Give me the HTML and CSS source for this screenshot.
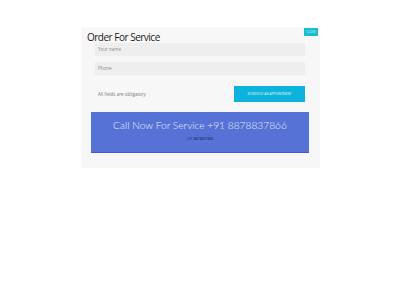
FILE: index.html
```html
<!DOCTYPE html>
<html>
<head>
<meta charset="utf-8">
<link rel="stylesheet" href="styles.css">
</head>
<body>
<div class="modal">
  <button class="close">CLOSE</button>
  <h2 class="title">Order For Service</h2>
  <div class="field">Your name</div>
  <div class="field">Phone</div>
  <div class="row">
    <span class="note">All fields are obligatory</span>
    <button class="submit">SCHEDULE AN APPOINTMENT</button>
  </div>
  <div class="callbox">
    <div class="call-main">Call Now For Service +91 8878837866</div>
    <div class="call-sub">+91 8878837866</div>
  </div>
</div>
</body>
</html>
```

FILE: styles.css
```css
html, body { margin: 0; padding: 0; background: #ffffff; }
body { font-family: "Open Sans", "Noto Sans", sans-serif; }
.modal {
  position: relative;
  margin: 28px 0 0 82px;
  width: 237px;
  height: 140px;
  background: #f7f7f7;
  box-shadow: 0 0 1px rgba(0,0,0,0.15);
  box-sizing: border-box;
  padding-top: 2px;
}
.close {
  position: absolute;
  top: 0;
  right: 1px;
  width: 14px;
  height: 8px;
  padding: 0;
  border: 0;
  background: #1bbcd1;
  color: #d8f4f8;
  font-size: 3px;
  line-height: 8px;
  font-family: "Open Sans", sans-serif;
}
.title {
  margin: 0 0 0 5px;
  height: 13px;
  font-size: 10px;
  line-height: 13px;
  letter-spacing: -0.5px;
  font-weight: 400;
  color: #1a1a1a;
  padding-top: 1px;
  box-sizing: border-box;
  font-family: "Open Sans", sans-serif;
}
.field {
  margin: 0 0 6px 13px;
  width: 210px;
  height: 13px;
  background: #eeeeee;
  color: #8a8a8a;
  font-size: 4.5px;
  line-height: 13px;
  padding-left: 3px;
  box-sizing: border-box;
}
.row {
  display: flex;
  align-items: center;
  justify-content: space-between;
  margin: 11px 0 0 16px;
  width: 207px;
  height: 16px;
}
.note { font-size: 4.5px; color: #777; }
.submit {
  width: 71px;
  height: 16px;
  padding: 0;
  border: 0;
  background: #0db3dc;
  color: #e8f8fc;
  font-size: 3.2px;
  font-family: "Open Sans", sans-serif;
}
.callbox {
  margin: 10px 0 0 9px;
  width: 218px;
  height: 41px;
  background: #5672d6;
  border-bottom: 1px solid #3f5ad0;
  box-sizing: border-box;
  text-align: center;
  padding-top: 7px;
}
.call-main {
  font-family: "Lato", "Open Sans", sans-serif;
  font-weight: 300;
  font-size: 10.2px;
  line-height: 13px;
  color: #e8ecfa;
}
.call-sub {
  margin-top: 4px;
  font-size: 3.5px;
  color: #1a2250;
}
```
